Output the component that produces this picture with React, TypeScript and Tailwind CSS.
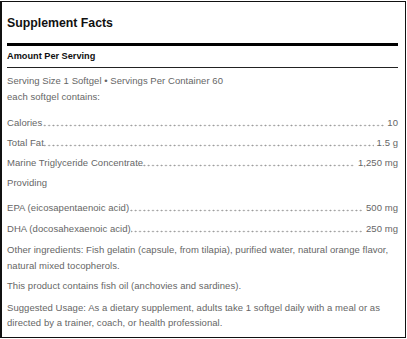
import React from 'react';

type Fact = { label: string; value?: string };

const facts: Fact[] = [
  { label: 'Calories', value: '10' },
  { label: 'Total Fat', value: '1.5 g' },
  { label: 'Marine Triglyceride Concentrate', value: '1,250 mg' },
  { label: 'Providing' },
];

const acids: Fact[] = [
  { label: 'EPA (eicosapentaenoic acid)', value: '500 mg' },
  { label: 'DHA (docosahexaenoic acid)', value: '250 mg' },
];

function FactRow({ label, value }: Fact) {
  if (!value) {
    return <div className="h-[14px] leading-[14px]">{label}</div>;
  }
  return (
    <div className="flex h-[14px] justify-between leading-[14px] bg-[radial-gradient(circle,#999_0.7px,transparent_1.1px)] bg-[length:4.33px_3px] bg-[position:1px_8.2px] bg-repeat-x">
      <span className="whitespace-nowrap bg-white">{label}</span>
      <span className="whitespace-nowrap bg-white pl-[3px]">{value}</span>
    </div>
  );
}

export default function App() {
  return (
    <div className="pt-px" style={{ fontFamily: '"Liberation Sans", Arial, sans-serif' }}>
      <div className="h-[337px] w-[406px] border border-l-2 border-[#111] bg-white pl-[5px] pr-[7px]">
        {/* Header */}
        <h2 className="pt-[13px] text-[12.3px] font-bold leading-[17px] text-[#111]">Supplement Facts</h2>
        <div className="mt-[11px] h-[3px] bg-black" />
        <div className="mt-[3px] text-[9.2px] font-bold leading-[14px] text-[#111]">Amount Per Serving</div>
        <div className="mt-[4px] h-px bg-[#222]" />

        {/* Body */}
        <div className="text-[9.5px] tracking-[0.05px] text-[#666]">
          <div className="mt-[6px] leading-[14px]">Serving Size 1 Softgel • Servings Per Container 60</div>
          <div className="mt-[2px] leading-[14px]">each softgel contains:</div>

          <div className="mt-[12px] flex flex-col gap-[6px]">
            {facts.map(f => <FactRow key={f.label} {...f} />)}
          </div>

          <div className="mt-[11px] flex flex-col gap-[7px]">
            {acids.map(f => <FactRow key={f.label} {...f} />)}
          </div>

          <p className="mt-[6px] leading-[16px]">
            Other ingredients: Fish gelatin (capsule, from tilapia), purified water, natural orange flavor, natural mixed tocopherols.
          </p>
          <p className="mt-[5px] leading-[14px]">This product contains fish oil (anchovies and sardines).</p>
          <p className="mt-[7px] leading-[15px]">
            Suggested Usage: As a dietary supplement, adults take 1 softgel daily with a meal or as directed by a trainer, coach, or health professional.
          </p>
        </div>
      </div>
    </div>
  );
}
